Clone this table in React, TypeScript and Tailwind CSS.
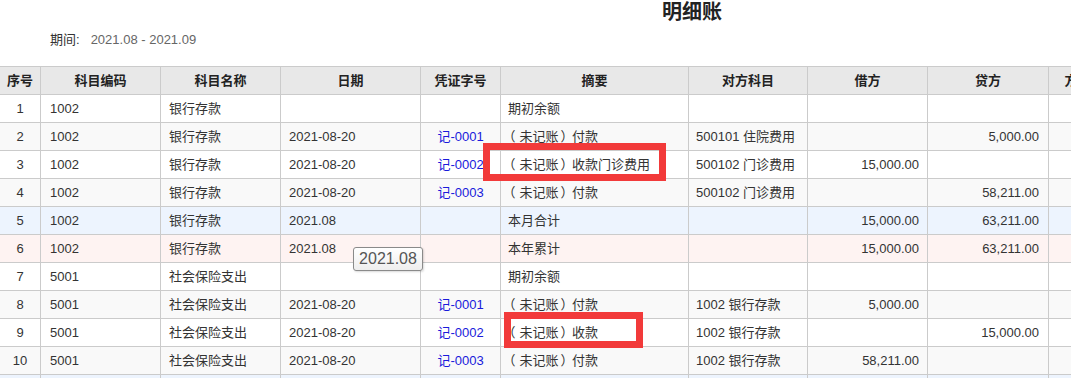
import React from "react";

type Row = {
  no: string;
  code: string;
  name: string;
  date: string;
  voucher: string;
  summary: string;
  opp: string;
  debit: string;
  credit: string;
  kind?: "month" | "year";
};

const rows: Row[] = [
  { no: "1", code: "1002", name: "银行存款", date: "", voucher: "", summary: "期初余额", opp: "", debit: "", credit: "" },
  { no: "2", code: "1002", name: "银行存款", date: "2021-08-20", voucher: "记-0001", summary: "（未记账）付款", opp: "500101 住院费用", debit: "", credit: "5,000.00" },
  { no: "3", code: "1002", name: "银行存款", date: "2021-08-20", voucher: "记-0002", summary: "（未记账）收款门诊费用", opp: "500102 门诊费用", debit: "15,000.00", credit: "" },
  { no: "4", code: "1002", name: "银行存款", date: "2021-08-20", voucher: "记-0003", summary: "（未记账）付款", opp: "500102 门诊费用", debit: "", credit: "58,211.00" },
  { no: "5", code: "1002", name: "银行存款", date: "2021.08", voucher: "", summary: "本月合计", opp: "", debit: "15,000.00", credit: "63,211.00", kind: "month" },
  { no: "6", code: "1002", name: "银行存款", date: "2021.08", voucher: "", summary: "本年累计", opp: "", debit: "15,000.00", credit: "63,211.00", kind: "year" },
  { no: "7", code: "5001", name: "社会保险支出", date: "", voucher: "", summary: "期初余额", opp: "", debit: "", credit: "" },
  { no: "8", code: "5001", name: "社会保险支出", date: "2021-08-20", voucher: "记-0001", summary: "（未记账）付款", opp: "1002 银行存款", debit: "5,000.00", credit: "" },
  { no: "9", code: "5001", name: "社会保险支出", date: "2021-08-20", voucher: "记-0002", summary: "（未记账）收款", opp: "1002 银行存款", debit: "", credit: "15,000.00" },
  { no: "10", code: "5001", name: "社会保险支出", date: "2021-08-20", voucher: "记-0003", summary: "（未记账）付款", opp: "1002 银行存款", debit: "58,211.00", credit: "" },
  // only a sliver of this row is visible at the bottom edge
  { no: "", code: "", name: "", date: "", voucher: "", summary: "", opp: "", debit: "", credit: "", kind: "month" },
];

const cell = "shrink-0 border-r border-b border-[#cbcbcb] h-full flex items-center overflow-hidden whitespace-nowrap";

// the source font sets full-width parens centred in their box; use the
// half-width form and space them out instead
function Summary({ text }: { text: string }) {
  const m = text.match(/^（(.*)）(.*)$/);
  if (!m) return <>{text}</>;
  return (
    <>
      <span className="[font-feature-settings:'halt'] ml-[1px] mr-[4px]">（</span>
      {m[1]}
      <span className="[font-feature-settings:'halt'] ml-[2px] mr-[5px]">）</span>
      {m[2]}
    </>
  );
}

export default function App() {
  return (
    <div
      className="w-[1071px] h-[378px] overflow-hidden bg-white relative"
      style={{ fontFamily: '"Liberation Sans", "Noto Sans CJK SC", sans-serif' }}
    >
      <div className="w-[1384px]">
        {/* title + period */}
        <div className="h-[66px] flex flex-col">
          <div className="flex justify-center pt-[1px]">
            <h1 className="text-[20px] leading-[22px] font-bold text-[#222]">明细账</h1>
          </div>
          <div className="flex items-center gap-[11px] pl-[50px] mt-[9px] text-[13px] leading-4">
            <span className="text-[#333]">期间:</span>
            <span className="text-[#666]">2021.08 - 2021.09</span>
          </div>
        </div>

        {/* header */}
        <div className="flex h-[29px] bg-[#e8e8e8] border-t border-[#cbcbcb] text-[13px] font-bold text-[#222]">
          <div className={`${cell} w-[41px] justify-center`}>序号</div>
          <div className={`${cell} w-[120px] justify-center`}>科目编码</div>
          <div className={`${cell} w-[120px] justify-center`}>科目名称</div>
          <div className={`${cell} w-[140px] justify-center`}>日期</div>
          <div className={`${cell} w-[80px] justify-center`}>凭证字号</div>
          <div className={`${cell} w-[188px] justify-center`}>摘要</div>
          <div className={`${cell} w-[119px] justify-center`}>对方科目</div>
          <div className={`${cell} w-[120px] justify-center`}>借方</div>
          <div className={`${cell} w-[121px] justify-center`}>贷方</div>
          <div className={`${cell} w-[58px] justify-center`}>方向</div>
          <div className={`${cell} w-[121px] justify-center`}>余额</div>
        </div>

        {/* body */}
        {rows.map((r, i) => {
          const bg =
            r.kind === "month"
              ? "bg-[#edf4fe]"
              : r.kind === "year"
              ? "bg-[#fef3f2]"
              : i % 2 === 1
              ? "bg-[#f9f9f9]"
              : "bg-white";
          return (
            <div key={i} className={`flex h-[28px] text-[13px] text-[#333] ${bg}`}>
              <div className={`${cell} w-[41px] justify-center`}>{r.no}</div>
              <div className={`${cell} w-[120px] pl-[9px]`}>{r.code}</div>
              <div className={`${cell} w-[120px] pl-[8px]`}>{r.name}</div>
              <div className={`${cell} w-[140px] pl-[8px]`}>{r.date}</div>
              <div className={`${cell} w-[80px] justify-center text-[#1a1adb]`}>{r.voucher}</div>
              <div className={`${cell} w-[188px] pl-[7px]`}>
                <Summary text={r.summary} />
              </div>
              <div className={`${cell} w-[119px] pl-[7px]`}>{r.opp}</div>
              <div className={`${cell} w-[120px] justify-end pr-[8px]`}>{r.debit}</div>
              <div className={`${cell} w-[121px] justify-end pr-[9px]`}>{r.credit}</div>
              <div className={`${cell} w-[58px] justify-center`}></div>
              <div className={`${cell} w-[121px] justify-end pr-[8px]`}></div>
            </div>
          );
        })}
      </div>

      {/* hover tooltip over the date cell */}
      <div className="absolute left-[353px] top-[247px] w-[70px] h-[24px] rounded-[3px] border border-[#8a8a8a] bg-gradient-to-b from-white to-[#eeeeee] shadow-[1px_1px_2px_rgba(0,0,0,0.15)] flex items-center justify-center text-[16px] text-[#555]">
        2021.08
      </div>

      {/* red annotation boxes */}
      <div className="absolute left-[483px] top-[143px] w-[183px] h-[38px] border-[7px] border-[#f23a3a]" />
      <div className="absolute left-[504px] top-[312px] w-[139px] h-[36px] border-[7px] border-[#f23a3a]" />
    </div>
  );
}
